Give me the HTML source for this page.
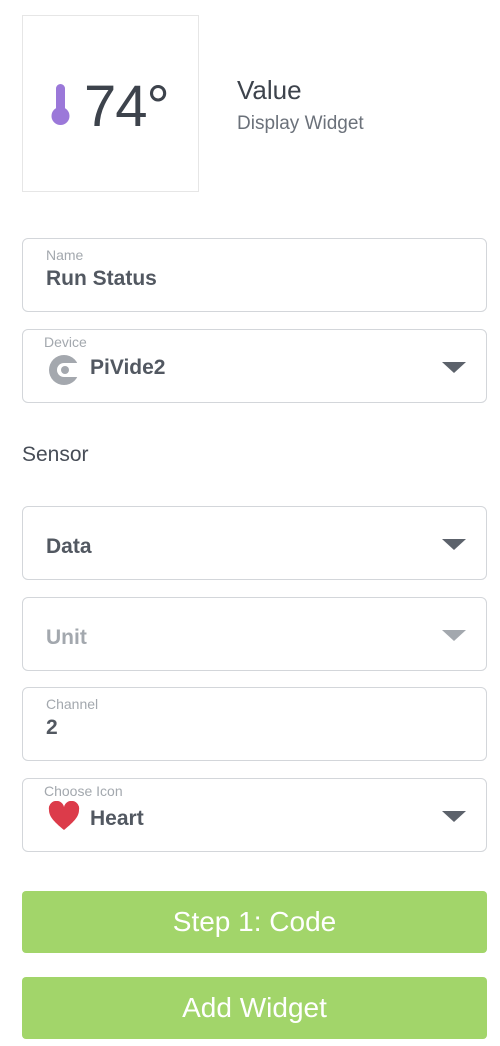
<!DOCTYPE html>
<html><head><style>
body{margin:0;width:500px;height:1046px;background:#fff;font-family:"Liberation Sans",sans-serif;position:relative;overflow:hidden;color:#474d57}
.a{position:absolute}
.card{left:22px;top:15px;width:177px;height:177px;border:1px solid #e6e6e6;box-sizing:border-box}
.f{left:22px;width:465px;height:74px;border:1.5px solid #d3d6da;border-radius:6px;box-sizing:border-box}
.lbl{position:absolute;left:23px;top:8px;font-size:14px;color:#a3a8ae}
.val{position:absolute;left:23px;top:28px;font-size:21px;font-weight:bold;color:#525861}
.arr{position:absolute;right:20px;top:32px;width:0;height:0;border-left:12px solid transparent;border-right:12px solid transparent;border-top:11px solid #5c626b}
.btn{left:22px;width:465px;height:62px;background:#a2d56a;border-radius:4px;color:#fff;font-size:28px;text-align:center;line-height:62px}
</style></head><body>
<div class="a card"></div>
<svg class="a" style="left:50px;top:83px" width="22" height="45" viewBox="0 0 22 45"><rect x="6" y="1" width="9" height="30" rx="4.5" fill="#9b78d9"/><circle cx="10.5" cy="33" r="9" fill="#9b78d9"/></svg>
<div class="a" style="left:84px;top:73px;font-size:58px;color:#3d434c;letter-spacing:-1px">74°</div>
<div class="a" style="left:237px;top:75px;font-size:26px;color:#3d434c">Value</div>
<div class="a" style="left:237px;top:113px;font-size:19px;color:#6b717a">Display Widget</div>

<div class="a f" style="top:238px"><div class="lbl">Name</div><div class="val">Run Status</div></div>
<div class="a f" style="top:329px"><div class="lbl" style="left:21px;top:4px">Device</div>
<svg style="position:absolute;left:25px;top:24px" width="32" height="32" viewBox="0 0 32 32"><circle cx="16" cy="16" r="15" fill="#a4a8ae"/><circle cx="16" cy="16" r="7" fill="#fff"/><rect x="16" y="9" width="17" height="14" fill="#fff"/><circle cx="17" cy="16" r="4" fill="#a4a8ae"/></svg>
<div class="val" style="left:67px;top:26px">PiVide2</div><div class="arr"></div></div>
<div class="a" style="left:22px;top:443px;font-size:21px;color:#474d57">Sensor</div>
<div class="a f" style="top:506px"><div class="val" style="top:28px">Data</div><div class="arr"></div></div>
<div class="a f" style="top:597px"><div class="val" style="top:28px;color:#a3a8ae">Unit</div><div class="arr" style="border-top-color:#a3a8ae"></div></div>
<div class="a f" style="top:687px"><div class="lbl">Channel</div><div class="val">2</div></div>
<div class="a f" style="top:778px"><div class="lbl" style="left:21px;top:4px">Choose Icon</div>
<svg style="position:absolute;left:25px;top:22px" width="32" height="30" viewBox="0 0 32 30"><path d="M16 29C5 20 1 15 1 9A7.5 7.5 0 0 1 16 6A7.5 7.5 0 0 1 31 9C31 15 27 20 16 29Z" fill="#dc3b4a"/></svg>
<div class="val" style="left:67px;top:28px">Heart</div><div class="arr"></div></div>
<div class="a btn" style="top:891px">Step 1: Code</div>
<div class="a btn" style="top:977px">Add Widget</div>
</body></html>
